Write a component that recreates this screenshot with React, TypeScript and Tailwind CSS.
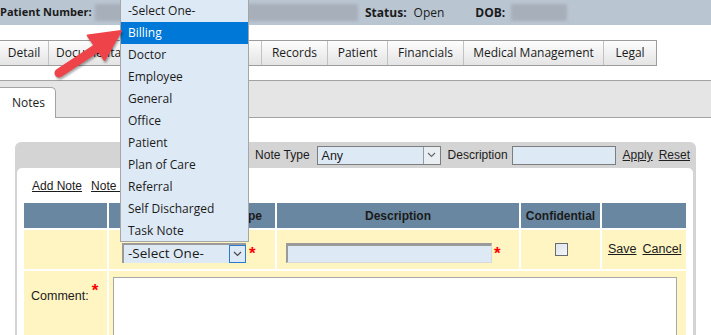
import React from "react";

const seg = "font-['Open_Sans',sans-serif]";
const ari = "font-['Liberation_Sans',Arial,sans-serif]";

function Chevron({ color = "#444" }: { color?: string }) {
  return (
    <svg width="9" height="6" viewBox="0 0 9 6" fill="none">
      <path d="M1 1 L4.5 4.5 L8 1" stroke={color} strokeWidth="1.1" />
    </svg>
  );
}

const tabs: { label: string; w: string }[] = [
  { label: "Detail", w: "w-[48px]" },
  { label: "Documentation", w: "w-[102px]" },
  { label: "Appointments", w: "w-[111px]" },
  { label: "Records", w: "w-[66px]" },
  { label: "Patient", w: "w-[60px]" },
  { label: "Financials", w: "w-[76px]" },
  { label: "Medical Management", w: "w-[140px]" },
  { label: "Legal", w: "w-[53px]" },
];

const options = [
  "-Select One-",
  "Billing",
  "Doctor",
  "Employee",
  "General",
  "Office",
  "Patient",
  "Plan of Care",
  "Referral",
  "Self Discharged",
  "Task Note",
];

function Star() {
  return <span className={`text-[#ff0000] text-[17px] font-bold leading-none ${ari}`}>*</span>;
}

export default function App() {
  return (
    <div className={`relative w-[711px] h-[335px] overflow-hidden bg-white text-[#1b1b1b] ${seg}`}>
      {/* Header */}
      <div className="h-[25px] bg-[#b9c5d1] flex items-center text-[12px]">
        <span className="font-bold text-[11px] w-[95px] whitespace-nowrap">Patient Number:</span>
        <div className="w-[263px] h-[17px] bg-[#a7afba] blur-[1.5px] rounded-[2px]" />
        <span className="font-bold ml-[7px]">Status:</span>
        <span className="ml-[7px]">Open</span>
        <span className="font-bold ml-[31px]">DOB:</span>
        <div className="ml-[6px] w-[56px] h-[17px] bg-[#a7afba] blur-[1.5px] rounded-[2px]" />
      </div>

      {/* Tab buttons */}
      <div className="mt-[15px] flex">
        <div className="flex h-[26px] border border-[#9c9c9c] -ml-[1px]">
          {tabs.map((t, i) => (
            <div
              key={t.label}
              className={`${t.w} h-full flex items-center justify-center text-[12px] whitespace-nowrap bg-gradient-to-b from-[#fdfdfd] to-[#e4e4e4] ${i > 0 ? "border-l border-[#c2c2c2]" : ""}`}
            >
              {t.label}
            </div>
          ))}
        </div>
      </div>

      {/* Notes tab strip */}
      <div className="mt-[14px] h-[38px] border-y border-[#a3a3a3] bg-[#e5e5e5] flex items-end">
        <div className="w-[57px] h-[31px] -ml-[1px] -mb-px bg-white border border-b-0 border-[#a3a3a3] rounded-tr-[5px] flex items-center pl-[12px] text-[12px]">
          Notes
        </div>
      </div>

      {/* Content */}
      <div className="pt-[24px] pl-[15px]">
        <div className="w-[681px] bg-[#d4d4d4] rounded-t-[6px] pl-[2px] pr-[3px]">
          {/* Filter row */}
          <div className={`h-[26px] flex items-center justify-end pr-[3px] text-[12px] ${ari}`}>
            <span>Note Type</span>
            <div className="ml-[7px] w-[124px] h-[19px] bg-[#dde9f4] border border-[#7d7d7d] flex items-center justify-between">
              <span className="pl-[4px] text-[12.5px] pt-[2px]">Any</span>
              <div className="w-[17px] h-[17px] border-l border-[#9a9a9a] bg-[#e9eef3] flex items-center justify-center">
                <Chevron color="#666" />
              </div>
            </div>
            <span className="ml-[7px]">Description</span>
            <div className="ml-[4px] w-[104px] h-[19px] bg-[#dde9f4] border border-[#7d7d7d]" />
            <span className="ml-[7px] underline text-[#222]">Apply</span>
            <span className="ml-[6px] underline text-[#222]">Reset</span>
          </div>

          {/* Inner white area */}
          <div className="bg-white rounded-t-[5px] h-[170px] pl-[7px]">
            <div className={`h-[35px] flex items-center pl-[8px] text-[12px] ${ari}`}>
              <span className="underline">Add Note</span>
              <span className="underline ml-[9px]">Note S</span>
            </div>

            {/* Table */}
            <div className="grid grid-cols-[83px_166px_242px_79px_84px] grid-rows-[25px_39px_80px] gap-[2px] w-[662px]">
              {/* header row */}
              <div className="bg-[#6987a0]" />
              <div className={`bg-[#6987a0] flex items-center justify-end pr-[13px] text-[12px] font-bold ${ari}`}>
                Type
              </div>
              <div className={`bg-[#6987a0] flex items-center justify-center text-[12px] font-bold ${ari}`}>
                Description
              </div>
              <div className={`bg-[#6987a0] flex items-center justify-center text-[12px] font-bold ${ari}`}>
                Confidential
              </div>
              <div className="bg-[#6987a0]" />

              {/* row 1 */}
              <div className="bg-[#fff5c3]" />
              <div className="bg-[#fff5c3] flex items-start pl-[13px] pt-[13px]">
                <div className="w-[124px] h-[20px] bg-[#dde9f4] border-l-2 border-t-2 border-[#9a9a9a] flex items-center justify-between">
                  <span className="pl-[4px] text-[13.5px] leading-none">-Select One-</span>
                  <div className="w-[17px] h-[18px] border border-[#2a7ad3] bg-[#dde9f4] flex items-center justify-center">
                    <Chevron color="#444" />
                  </div>
                </div>
                <span className="ml-[3px] -mt-[2px]"><Star /></span>
              </div>
              <div className="bg-[#fff5c3] flex items-start pl-[9px] pt-[13px]">
                <div className="w-[206px] h-[20px] bg-[#dde9f4] border-l-2 border-t-[3px] border-[#9a9a9a] border-b border-r border-b-[#d8d8d8] border-r-[#d8d8d8]" />
                <span className="ml-[2px] -mt-[2px]"><Star /></span>
              </div>
              <div className="bg-[#fff5c3] flex items-center justify-center pl-[1px] pb-[1px]">
                <div className="w-[13px] h-[13px] border border-[#6b6b6b] bg-gradient-to-br from-[#dde4ec] to-[#f4f6f8]" />
              </div>
              <div className={`bg-[#fff5c3] flex items-center pl-[6px] text-[12.5px] ${ari}`}>
                <span className="underline">Save</span>
                <span className="underline ml-[6px]">Cancel</span>
              </div>

              {/* row 2 */}
              <div className={`bg-[#fff5c3] pl-[7px] pt-[12px] flex items-start text-[12.5px] ${ari}`}>
                <span className="mt-[4px]">Comment:</span>
                <span className="ml-[3px] -mt-[1px]"><Star /></span>
              </div>
              <div className="col-span-4 bg-[#fff5c3] pl-[4px] pr-[9px] pt-[6px]">
                <div className="w-full h-[80px] bg-white border border-[#a8a8a8]" />
              </div>
            </div>
          </div>
        </div>
      </div>

      {/* Dropdown overlay */}
      <div className="absolute left-[120px] top-[-1px] w-[129px] h-[243px] bg-[#dde9f4] border border-[#a6a6a6] text-[12px]">
        {options.map((o, i) => (
          <div
            key={o}
            className={`h-[22px] flex items-center pl-[7px] whitespace-nowrap ${i === 1 ? "bg-[#0078d7] text-white" : ""}`}
          >
            {o}
          </div>
        ))}
      </div>

      {/* Red arrow */}
      <svg
        className="absolute left-0 top-0 pointer-events-none drop-shadow-[1px_2px_1px_rgba(0,0,0,0.35)]"
        width="711"
        height="335"
        viewBox="0 0 711 335"
      >
        <line x1="59" y1="73" x2="100" y2="46" stroke="#ef434a" strokeWidth="9" strokeLinecap="round" />
        <polygon points="121,31 104.5,60 87.7,35.5" fill="#ef434a" stroke="#ef434a" strokeWidth="2" strokeLinejoin="round" />
      </svg>
    </div>
  );
}
